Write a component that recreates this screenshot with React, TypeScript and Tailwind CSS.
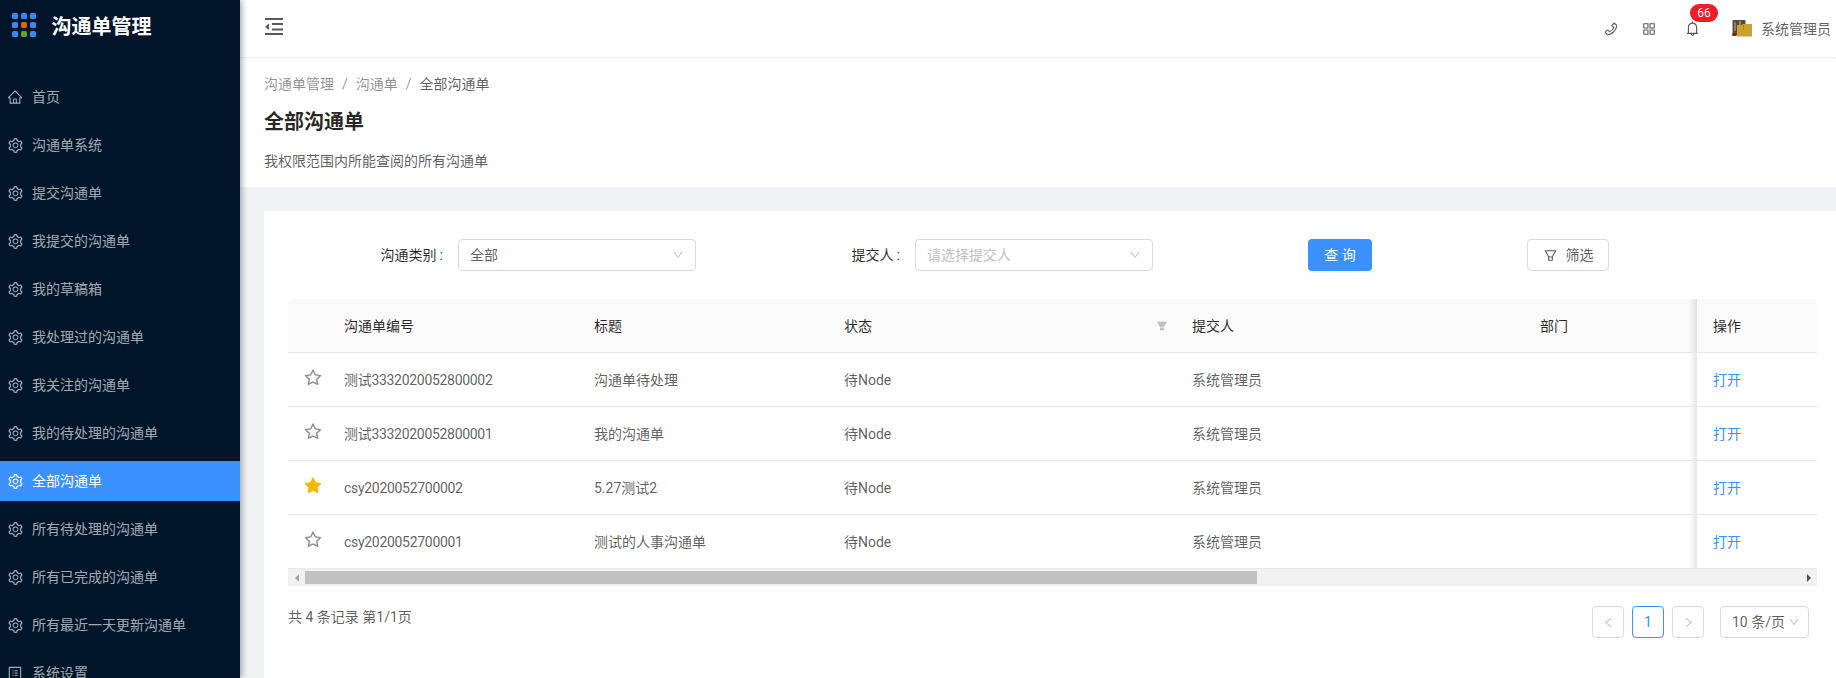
import React from "react";
import {
  AiOutlineHome,
  AiOutlineSetting,
  AiOutlineProfile,
  AiOutlinePhone,
  AiOutlineAppstore,
  AiOutlineBell,
  AiOutlineDown,
  AiOutlineFilter,
  AiFillFilter,
  AiOutlineStar,
  AiFillStar,
  AiOutlineLeft,
  AiOutlineRight,
} from "react-icons/ai";

const nav = [
  { label: "首页", icon: "home" },
  { label: "沟通单系统" },
  { label: "提交沟通单" },
  { label: "我提交的沟通单" },
  { label: "我的草稿箱" },
  { label: "我处理过的沟通单" },
  { label: "我关注的沟通单" },
  { label: "我的待处理的沟通单" },
  { label: "全部沟通单", active: true },
  { label: "所有待处理的沟通单" },
  { label: "所有已完成的沟通单" },
  { label: "所有最近一天更新沟通单" },
  { label: "系统设置", icon: "profile" },
];

const rows = [
  { id: "测试3332020052800002", title: "沟通单待处理", star: false },
  { id: "测试3332020052800001", title: "我的沟通单", star: false },
  { id: "csy2020052700002", title: "5.27测试2", star: true },
  { id: "csy2020052700001", title: "测试的人事沟通单", star: false },
];

const dots = ["#2f8cf5", "#2f8cf5", "#2f8cf5", "#2f8cf5", "#e8630a", "#2f8cf5", "#2f8cf5", "#52a81f", "#2f8cf5"];

function Select({ text, placeholder }: { text: string; placeholder?: boolean }) {
  return (
    <div className="ml-[15px] flex h-[32px] w-[238px] items-center justify-between rounded-[4px] border border-[#d9d9d9] bg-white pl-[11px] pr-[11px]">
      <span className={placeholder ? "text-[#bfbfbf]" : "text-[#000000a6]"}>{text}</span>
      <AiOutlineDown size={12} className="text-[#bfbfbf]" />
    </div>
  );
}

function FixedShadow() {
  return <span className="absolute bottom-0 left-[-8px] top-0 w-[8px] bg-gradient-to-r from-transparent to-[#0000001a]" />;
}

export default function App() {
  return (
    <div className="flex h-[678px] w-[1836px] overflow-hidden bg-white text-[14px] leading-[22px] text-[#000000a6] [font-family:'Roboto','Noto_Sans_CJK_SC',sans-serif]">
      <aside className="z-10 flex w-[240px] shrink-0 flex-col overflow-hidden bg-[#00152a] shadow-[2px_0_6px_rgba(0,21,41,0.35)]">
        <div className="flex h-[77px] shrink-0 items-start pl-[12px] pt-[13px]">
          <div className="grid grid-cols-3 gap-[3.5px]">
            {dots.map((c, i) => (
              <span key={i} className="h-[5.5px] w-[5.5px] rounded-[1.5px]" style={{ backgroundColor: c }} />
            ))}
          </div>
          <span className="ml-[16px] mt-[1px] text-[20px] font-bold leading-[26px] text-white">沟通单管理</span>
        </div>
        <nav className="flex shrink-0 flex-col gap-[8px]">
          {nav.map((n) => (
            <div
              key={n.label}
              className={`flex h-[40px] shrink-0 items-center pl-[8px] ${
                n.active ? "bg-[#3a91ff] text-white" : "text-[#ffffffa6]"
              }`}
            >
              <span className="flex w-[14px] justify-center">
                {n.icon === "home" ? (
                  <AiOutlineHome size={16} className="shrink-0" />
                ) : n.icon === "profile" ? (
                  <AiOutlineProfile size={16} className="shrink-0" />
                ) : (
                  <AiOutlineSetting size={17} className="shrink-0" />
                )}
              </span>
              <span className="ml-[10px]">{n.label}</span>
            </div>
          ))}
        </nav>
      </aside>

      <main className="flex min-w-0 flex-1 flex-col">
        <header className="flex h-[58px] shrink-0 items-center justify-between border-b border-[#f0f0f0] pl-[25px] pr-[5px] shadow-[0_1px_2px_rgba(0,21,41,0.03)]">
          <svg width="18" height="17" viewBox="0 0 18 17" fill="#595959" className="mb-[4px]">
            <rect x="0" y="0" width="18" height="2" />
            <rect x="7" y="5" width="11" height="2" />
            <rect x="7" y="10.5" width="11" height="2" />
            <path d="M4 5.5 L0 8.75 L4 12 Z" />
            <rect x="0" y="15" width="18" height="2" />
          </svg>
          <div className="flex items-center">
            <AiOutlinePhone size={16} className="mr-[22px] text-[#000000a6]" />
            <AiOutlineAppstore size={16} className="mr-[27px] text-[#000000a6]" />
            <span className="relative mr-[31px] flex">
              <AiOutlineBell size={17} className="text-[#000000a6]" />
              <span className="absolute left-[6px] top-[-16px] flex h-[18px] w-[28px] items-center justify-center rounded-full bg-[#ee1c25] text-[12px] leading-[18px] text-white">
                66
              </span>
            </span>
            <svg width="20" height="17" viewBox="0 0 20 17" className="mr-[9px]">
              <rect x="0.5" y="0" width="13" height="14" rx="1" fill="#5a4a3c" />
              <rect x="2" y="2" width="2" height="9" fill="#8f7c62" />
              <rect x="7" y="1" width="2" height="4" fill="#9a8568" />
              <path d="M5 5h5l1 -1h9v12.5H5z" fill="#c9a32f" />
              <rect x="11" y="5" width="1" height="5" fill="#a5842a" />
              <rect x="0" y="13" width="5" height="3" rx="1.5" fill="#7a2418" />
            </svg>
            <span className="text-[#000000a6]">系统管理员</span>
          </div>
        </header>

        <section className="flex h-[129px] shrink-0 flex-col pl-[24px]">
          <div className="mt-[15px] flex items-center text-[#00000073]">
            <span>沟通单管理</span>
            <span className="mx-[8px]">/</span>
            <span>沟通单</span>
            <span className="mx-[8px]">/</span>
            <span className="text-[#000000a6]">全部沟通单</span>
          </div>
          <h1 className="mt-[13px] text-[20px] font-semibold leading-[28px] text-[#000000d9]">全部沟通单</h1>
          <p className="mt-[14px] text-[#000000a6]">我权限范围内所能查阅的所有沟通单</p>
        </section>

        <section className="flex min-h-0 flex-1 flex-col bg-[#f0f2f5] pl-[24px] pt-[24px]">
          <div className="flex-1 bg-white pl-[24px] pt-[28px]">
            <div className="flex h-[32px] items-center">
              <label className="w-[155px] text-right text-[#000000d9]">
                沟通类别<span className="ml-[3px]">:</span>
              </label>
              <Select text="全部" />
              <label className="w-[204px] text-right text-[#000000d9]">
                提交人<span className="ml-[3px]">:</span>
              </label>
              <Select text="请选择提交人" placeholder />
              <button className="ml-[155px] h-[32px] w-[64px] rounded-[4px] bg-[#3a91ff] text-white shadow-[0_2px_0_rgba(0,0,0,0.03)]">
                查 询
              </button>
              <button className="ml-[155px] flex h-[32px] w-[82px] items-center justify-center rounded-[4px] border border-[#d9d9d9] bg-white text-[#000000a6]">
                <AiOutlineFilter size={15} />
                <span className="ml-[8px]">筛选</span>
              </button>
            </div>

            <div className="mt-[28px] w-[1529px]">
              <div className="grid h-[54px] grid-cols-[40px_250px_250px_348px_348px_173px_120px] items-stretch rounded-t-[4px] border-b border-[#e8e8e8] bg-[#fafafa] text-[#000000d9]">
                <div />
                <div className="flex items-center pl-[16px]">沟通单编号</div>
                <div className="flex items-center pl-[16px]">标题</div>
                <div className="flex items-center justify-between pl-[16px] pr-[8px]">
                  状态
                  <AiFillFilter size={12} className="text-[#bfbfbf]" />
                </div>
                <div className="flex items-center pl-[16px]">提交人</div>
                <div className="flex items-center pl-[16px]">部门</div>
                <div className="relative flex items-center pl-[16px]">
                  <FixedShadow />
                  操作
                </div>
              </div>
              {rows.map((r) => (
                <div
                  key={r.id}
                  className="grid h-[54px] grid-cols-[40px_250px_250px_348px_348px_173px_120px] items-stretch border-b border-[#e8e8e8]"
                >
                  <div className="flex items-center justify-center pb-[4px] pl-[10px]">
                    {r.star ? (
                      <AiFillStar size={20} className="shrink-0 text-[#f5b800]" />
                    ) : (
                      <AiOutlineStar size={20} className="shrink-0 text-[#8c8c8c]" />
                    )}
                  </div>
                  <div className="flex items-center pl-[16px] tracking-[-0.3px]">{r.id}</div>
                  <div className="flex items-center pl-[16px]">{r.title}</div>
                  <div className="flex items-center pl-[16px]">待Node</div>
                  <div className="flex items-center pl-[16px]">系统管理员</div>
                  <div />
                  <div className="relative flex items-center bg-white pl-[16px] text-[#3a91ff]">
                    <FixedShadow />
                    打开
                  </div>
                </div>
              ))}
              <div className="flex h-[17px] items-center bg-[#f1f1f1]">
                <span className="flex w-[17px] justify-center">
                  <span className="h-0 w-0 border-y-[4px] border-r-[4px] border-y-transparent border-r-[#a3a3a3]" />
                </span>
                <span className="h-[13px] w-[952px] bg-[#c1c1c1]" />
                <span className="ml-auto flex w-[17px] justify-center">
                  <span className="h-0 w-0 border-y-[4px] border-l-[4px] border-y-transparent border-l-[#505050]" />
                </span>
              </div>
            </div>

            <div className="mt-[20px] flex w-[1529px] items-start justify-between pr-[8px]">
              <span>共 4 条记录 第1/1页</span>
              <div className="flex items-center gap-[8px]">
                <span className="flex h-[32px] w-[32px] items-center justify-center rounded-[4px] border border-[#d9d9d9] text-[#bfbfbf]">
                  <AiOutlineLeft size={13} />
                </span>
                <span className="flex h-[32px] w-[32px] items-center justify-center rounded-[4px] border border-[#3a91ff] text-[#3a91ff]">
                  1
                </span>
                <span className="flex h-[32px] w-[32px] items-center justify-center rounded-[4px] border border-[#d9d9d9] text-[#bfbfbf]">
                  <AiOutlineRight size={13} />
                </span>
                <span className="ml-[8px] flex h-[32px] w-[89px] items-center justify-between rounded-[4px] border border-[#d9d9d9] pl-[11px] pr-[8px]">
                  10 条/页
                  <AiOutlineDown size={12} className="text-[#bfbfbf]" />
                </span>
              </div>
            </div>
          </div>
        </section>
      </main>
    </div>
  );
}
